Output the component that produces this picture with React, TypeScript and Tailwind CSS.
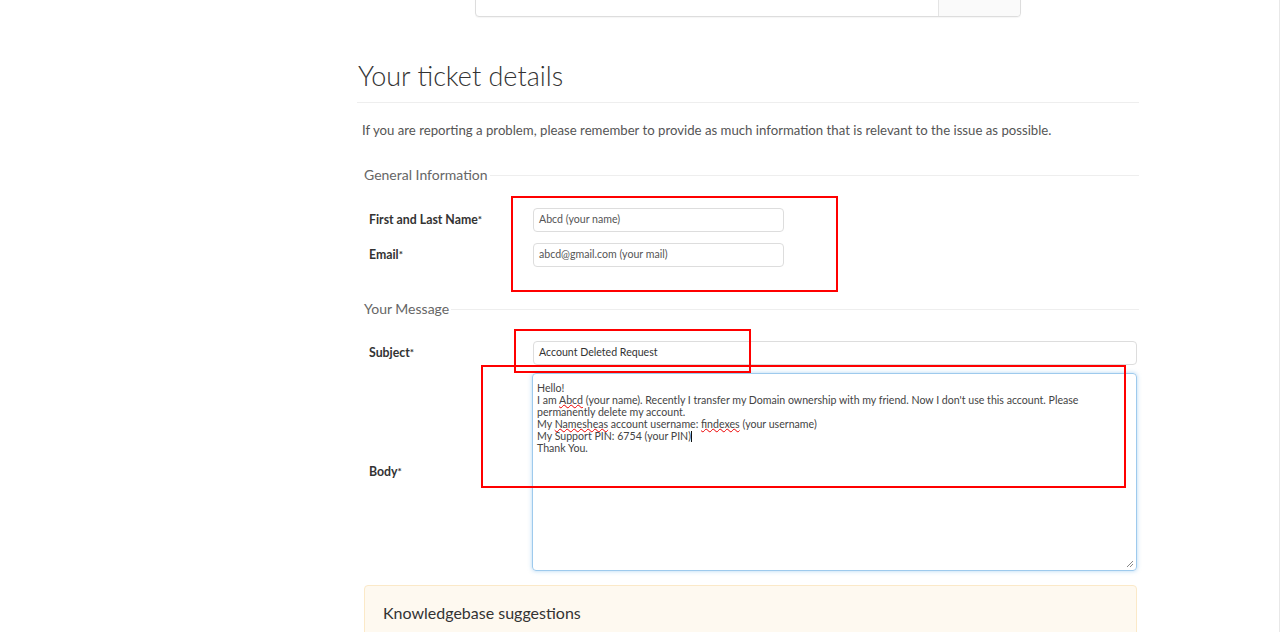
import React from "react";

const font = { fontFamily: "Lato, 'Open Sans', sans-serif" };

function Label({ children }: { children: React.ReactNode }) {
  return (
    <div className="w-[164px] shrink-0 text-[12.3px] font-bold text-[#333]">
      {children}
      <sup className="text-[10px] relative -top-[1px]">*</sup>
    </div>
  );
}

function Legend({ children }: { children: React.ReactNode }) {
  return (
    <div className="flex items-center">
      <span className="text-[14px] text-[#666] pr-[2px]">{children}</span>
      <div className="flex-1 h-px bg-[#eeeeee] mt-[1px]" />
    </div>
  );
}

function Wavy({ children }: { children: React.ReactNode }) {
  return (
    <span className="underline decoration-wavy decoration-[#e00] decoration-[1px] underline-offset-[0px]">
      {children}
    </span>
  );
}

export default function App() {
  return (
    <div className="relative w-[1280px] h-[632px] overflow-hidden bg-white border-r border-[#e8e8e8]" style={font}>
      {/* top search */}
      <div className="ml-[475px] -mt-[23px] w-[546px] h-[40px] flex border border-[#dddddd] rounded-[4px] bg-white shadow-[0_1px_1px_rgba(0,0,0,0.04)]">
        <div className="flex-1 px-[12px] pt-[2px] text-[14px] text-[#aab]">What can we help you with?</div>
        <div className="w-[82px] border-l border-[#e4e4e4] bg-[#fafafa] rounded-r-[4px]" />
      </div>

      <div className="ml-[357px] w-[782px]">
        <h1 className="mt-[43px] text-[27px] leading-[32px] font-light text-[#333] pl-[1px]">Your ticket details</h1>
        <div className="mt-[10px] h-px bg-[#eeeeee]" />
        <p className="mt-[18px] pl-[5px] text-[13.2px] leading-[18px] text-[#555]">
          If you are reporting a problem, please remember to provide as much information that is relevant to the issue as possible.
        </p>

        <div className="ml-[7px] mt-[25px]">
          <Legend>General Information</Legend>

          <div className="mt-[23px] flex items-center pl-[5px]">
            <Label>First and Last Name</Label>
            <div className="w-[251px] h-[24px] border border-[#dddddd] rounded-[4px] px-[5px] flex items-center text-[10.6px] text-[#555]">
              Abcd (your name)
            </div>
          </div>
          <div className="mt-[11px] flex items-center pl-[5px]">
            <Label>Email</Label>
            <div className="w-[251px] h-[24px] border border-[#dddddd] rounded-[4px] px-[5px] flex items-center text-[10.6px] text-[#555]">
              abcd@gmail.com (your mail)
            </div>
          </div>

          <div className="mt-[31px]">
            <Legend>Your Message</Legend>
          </div>

          <div className="mt-[22px] flex items-center pl-[5px]">
            <Label>Subject</Label>
            <div className="flex-1 mr-[2px] h-[24px] border border-[#dddddd] rounded-[4px] px-[5px] flex items-center text-[10.6px] text-[#333]">
              Account Deleted Request
            </div>
          </div>

          <div className="mt-[8px] flex items-center pl-[5px]">
            <Label>Body</Label>
            <div className="relative flex-1 mr-[2px] h-[198px] border border-[#9ecaed] rounded-[4px] shadow-[0_0_4px_rgba(102,175,233,0.5)] px-[4px] pt-[8px] text-[10.6px] leading-[12px] text-[#444] -ml-[1px]">
              <div>Hello!</div>
              <div>
                I am <Wavy>Abcd</Wavy> (your name). Recently I transfer my Domain ownership with my friend. Now I don't use this account. Please
                permanently delete my account.
              </div>
              <div>
                My <Wavy>Namesheas</Wavy> account username: <Wavy>findexes</Wavy> (your username)
              </div>
              <div>
                My Support PIN: 6754 (your PIN)
                <span className="inline-block w-px h-[11px] bg-[#111] align-middle -mt-[1px]" />
              </div>
              <div>Thank You.</div>
              <svg className="absolute right-[2px] bottom-[2px]" width="8" height="8" viewBox="0 0 8 8">
                <path d="M7 1 L1 7 M7 4 L4 7" stroke="#888" strokeWidth="1" fill="none" />
              </svg>
            </div>
          </div>

          <div className="mt-[14px] mr-[2px] h-[80px] border border-[#fbe9c8] bg-[#fef9f0] rounded-[4px] px-[18px] pt-[17px]">
            <div className="text-[16px] leading-[20px] text-[#333]">Knowledgebase suggestions</div>
            <div className="mt-[9px] text-[12px] text-[#555]">
              We've found the following articles in our knowledgebase which may be able to help you with your issue.
            </div>
          </div>
        </div>
      </div>

      {/* red annotation boxes */}
      <div className="absolute left-[511px] top-[196px] w-[327px] h-[96px] border-2 border-[#ff0000]" />
      <div className="absolute left-[514px] top-[329px] w-[237px] h-[44px] border-2 border-[#ff0000]" />
      <div className="absolute left-[481px] top-[365px] w-[645px] h-[123px] border-2 border-[#ff0000]" />
    </div>
  );
}
